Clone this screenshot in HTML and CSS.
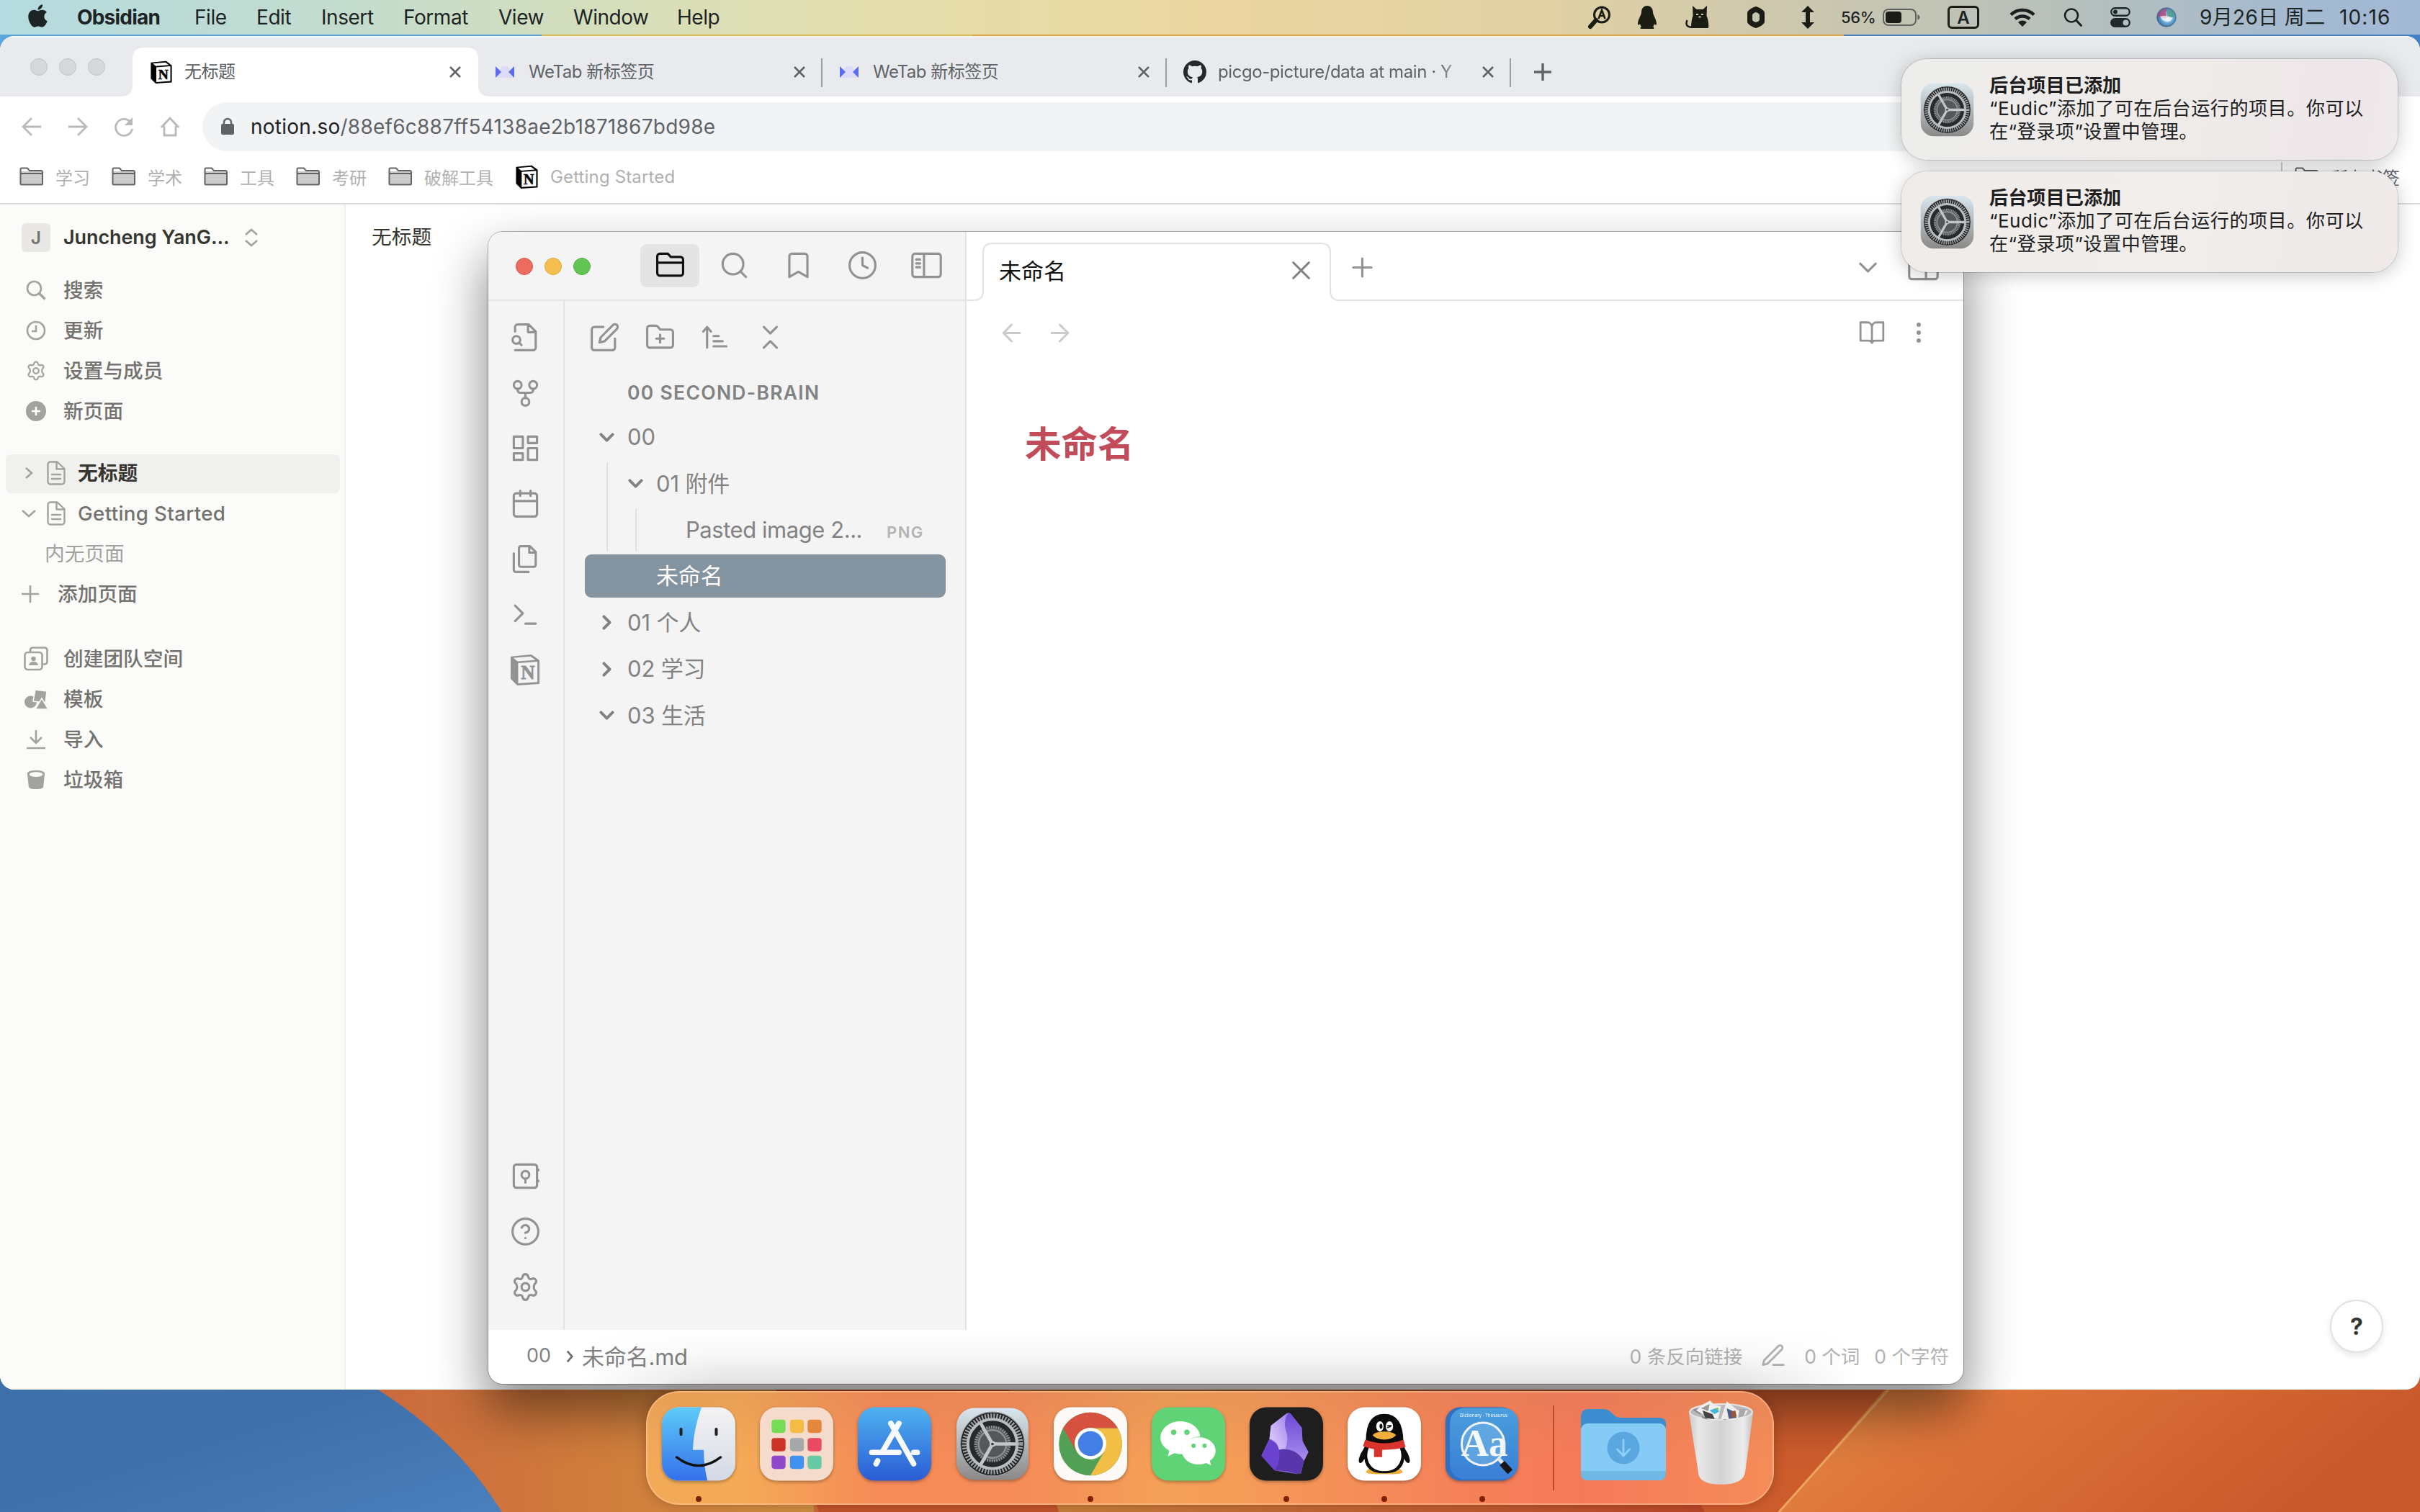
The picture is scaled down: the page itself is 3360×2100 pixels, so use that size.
FILE: index.html
```html
<!DOCTYPE html>
<html lang="zh-CN">
<head>
<meta charset="utf-8">
<title>Desktop</title>
<link rel="stylesheet" href="styles.css">
</head>
<body>
<svg class="defs" aria-hidden="true">
  <defs>
    <linearGradient id="gBlue" x1="0" y1="0" x2="1" y2="1"><stop offset="0" stop-color="#3c70a8"/><stop offset=".45" stop-color="#3f6fa9"/><stop offset="1" stop-color="#4a80bd"/></linearGradient>
    <linearGradient id="gLeft" x1="0" y1="0" x2="1" y2="0"><stop offset="0" stop-color="#c9683d"/><stop offset=".5" stop-color="#d27c3c"/><stop offset="1" stop-color="#cd8f40"/></linearGradient>
    <linearGradient id="gMid" x1="0" y1="0" x2="1" y2="0"><stop offset="0" stop-color="#c8843c"/><stop offset="1" stop-color="#b9472a"/></linearGradient>
    <linearGradient id="gRight" x1="0" y1="0" x2="1" y2=".3"><stop offset="0" stop-color="#dc8f45"/><stop offset=".35" stop-color="#e0763b"/><stop offset="1" stop-color="#c9592b"/></linearGradient>
    <linearGradient id="gGear" x1="0" y1="0" x2="0" y2="1"><stop offset="0" stop-color="#d9e6ee"/><stop offset="1" stop-color="#8b8987"/></linearGradient>
    <linearGradient id="gFinder" x1="0" y1="0" x2="0" y2="1"><stop offset="0" stop-color="#5ecbf9"/><stop offset="1" stop-color="#3470ea"/></linearGradient>
    <linearGradient id="gFinderR" x1="0" y1="0" x2="0" y2="1"><stop offset="0" stop-color="#f3f2f3"/><stop offset="1" stop-color="#d3dae6"/></linearGradient>
    <linearGradient id="gStore" x1="0" y1="0" x2="0" y2="1"><stop offset="0" stop-color="#4fb2ef"/><stop offset="1" stop-color="#2a5cd6"/></linearGradient>
    <linearGradient id="gDict" x1="0" y1="0" x2="0" y2="1"><stop offset="0" stop-color="#4a9edd"/><stop offset="1" stop-color="#3a7fd6"/></linearGradient>
    <linearGradient id="gCrystalA" x1="0" y1="1" x2="1" y2="0"><stop offset="0" stop-color="#e3d5fb"/><stop offset="1" stop-color="#a384ee"/></linearGradient>
    <linearGradient id="gCrystalB" x1="0" y1="0" x2="0" y2="1"><stop offset="0" stop-color="#6d48d6"/><stop offset="1" stop-color="#a98ced"/></linearGradient>
    <linearGradient id="gTrash" x1="0" y1="0" x2="1" y2="0"><stop offset="0" stop-color="#c9c8c9"/><stop offset=".15" stop-color="#e8e8e9"/><stop offset=".5" stop-color="#d2d2d2"/><stop offset=".85" stop-color="#ececec"/><stop offset="1" stop-color="#c2c2c2"/></linearGradient>
    <radialGradient id="gSiri" cx=".55" cy=".5" r=".55"><stop offset="0" stop-color="#f4fbff"/><stop offset=".35" stop-color="#8fc9ea"/><stop offset=".75" stop-color="#4a8fc0"/><stop offset="1" stop-color="#3f5f8a"/></radialGradient>
  </defs>
  <symbol id="notion" viewBox="0 0 44 46">
    <path d="M2 5 L31 2 L42 10 V43 L11 45 L2 36 Z" fill="currentColor" stroke="currentColor" stroke-width="2" stroke-linejoin="round"/>
    <path d="M5 6 L30 4 L37 9 L11 11 Z" fill="var(--paper)"/>
    <path d="M12 13.500 L40 11.500 V41 L12 43 Z" fill="var(--paper)"/>
    <text x="26" y="37" text-anchor="middle" font-family="Liberation Serif" font-weight="700" font-size="28" fill="currentColor" stroke="currentColor" stroke-width=".8">N</text>
  </symbol>
  <symbol id="x" viewBox="0 0 16 16"><path d="M1 1 15 15M15 1 1 15" fill="none" stroke="currentColor" stroke-width="2.600"/></symbol>
  <symbol id="wetab" viewBox="0 0 26 16"><path d="M0 16 9 0h8l9 16z" fill="#dcdcfa"/><path d="M0 0 8 8 0 16zM26 0 18 8l8 8z" fill="#5a6cf0"/></symbol>
  <symbol id="bfolder" viewBox="0 0 34 26"><path d="M2 6h30v16a2 2 0 0 1-2 2H4a2 2 0 0 1-2-2z" fill="#ccc"/><path d="M1.500 23V3a1.500 1.500 0 0 1 1.500-1.500h8l3 3.500h16a2 2 0 0 1 2 2v16a1.500 1.500 0 0 1-1.500 1.500H3A1.500 1.500 0 0 1 1.500 23zM2 9h30" fill="none" stroke="#626367" stroke-width="2"/></symbol>
  <symbol id="gearfull" viewBox="0 0 100 100">
    <rect x="1" y="1" width="98" height="98" rx="24" fill="url(#gGear)"/>
    <circle cx="50" cy="50" r="43.500" fill="#1d1e1f"/>
    <circle cx="50" cy="50" r="38" fill="none" stroke="#9da1a4" stroke-width="7" stroke-dasharray="2.200 1.800"/>
    <circle cx="50" cy="50" r="43.500" fill="none" stroke="#9a9da0" stroke-width="1"/>
    <circle cx="50" cy="50" r="33.500" fill="#27292a" stroke="#b9bdc0" stroke-width="4"/>
    <circle cx="50" cy="50" r="23" fill="#4c4e4f" stroke="#8d9092" stroke-width="4" stroke-dasharray="2 1.200"/>
    <circle cx="50" cy="50" r="19" fill="#555758" stroke="#8e9193" stroke-width="2.500"/>
    <path d="M50 50h32M50 50 34 22M50 50 34 78" stroke="#c3c7ca" stroke-width="4.500"/>
    <circle cx="50" cy="50" r="4" fill="#c3c7ca"/><circle cx="50" cy="50" r="1.800" fill="#333"/>
  </symbol>
  <symbol id="gear" viewBox="0 0 24 24"><path d="M12 2c1.300 0 1.900.8 2.200 2.100.3 1.500 1.400 2.100 2.800 1.600 1.300-.5 2.300-.4 3 .7s.4 2.100-.6 3c-1.200 1.100-1.200 4.100 0 5.200 1 .9 1.300 1.900.6 3s-1.700 1.200-3 .7c-1.400-.5-2.500.1-2.800 1.600C13.900 21.200 13.300 22 12 22s-1.900-.8-2.200-2.100c-.3-1.500-1.400-2.100-2.800-1.600-1.300.5-2.300.4-3-.7s-.4-2.100.6-3c1.200-1.100 1.200-4.100 0-5.200-1-.9-1.300-1.900-.6-3s1.700-1.200 3-.7c1.400.5 2.500-.1 2.800-1.600C10.100 2.800 10.700 2 12 2z"/><circle cx="12" cy="12" r="3"/></symbol>
  <symbol id="doc" viewBox="0 0 26 34"><path d="M1.500 5a3.500 3.500 0 0 1 3.500-3.500h9.500L24.500 11v18a3.500 3.500 0 0 1-3.500 3.500H5A3.500 3.500 0 0 1 1.500 29zM13.500 2v9.500h11M7 19h12M7 25h12" fill="none" stroke="currentColor" stroke-width="2.400" stroke-linejoin="round" stroke-linecap="round"/></symbol>
  <symbol id="chev" viewBox="0 0 24 24"><path d="m6 9 6 6 6-6"/></symbol>
  <symbol id="chevr" viewBox="0 0 24 24"><path d="m9 6 6 6-6 6"/></symbol>
</svg>

<svg class="wallpaper" viewBox="0 0 3360 2100" preserveAspectRatio="none">
  <rect width="3360" height="2100" fill="#c96c3a"/>
  <rect width="752" height="90" fill="#5aa5da"/><rect x="752" width="600" height="90" fill="#d6b94e"/><rect x="1350" width="1250" height="90" fill="#dca140"/><rect x="2560" width="800" height="90" fill="#4382c4"/>
  <path d="M0 1880H500L525 1930Q635 2000 697 2100H0z" fill="url(#gBlue)"/>
  <path d="M500 1880H1130V2100H697Q635 2000 525 1930z" fill="url(#gLeft)"/>
  <path d="M1060 1880H1400L1470 2100H1137z" fill="#bf542c"/>
  <path d="M1380 1880H2300L2367 2100H1471z" fill="url(#gMid)"/>
  <path d="M2250 1880H2660L2470 2100H2367z" fill="#cd5c2d"/>
  <path d="M2660 1880H3360V2100H2470z" fill="url(#gRight)"/>
  <path d="M2622 1930 2470 2100" stroke="#eaa55f" stroke-width="3"/>
</svg>

<header class="menubar">
  <svg class="apple" viewBox="0 0 384 512"><path fill="#1d2424" d="M318.700 268.700c-.2-36.700 16.400-64.400 50-84.800-18.800-26.900-47.200-41.700-84.700-44.600-35.500-2.800-74.300 20.700-88.500 20.700-15 0-49.400-19.700-76.400-19.700C63.300 141.200 4 184.800 4 273.500q0 39.300 14.400 81.200c12.800 36.700 59 126.700 107.200 125.200 25.200-.6 43-17.900 75.800-17.900 31.800 0 48.300 17.900 76.400 17.900 48.600-.7 90.400-82.500 102.600-119.300-65.200-30.700-61.700-90-61.700-91.900zm-56.600-164.200c27.300-32.400 24.800-61.900 24-72.500-24.100 1.400-52 16.400-67.900 34.900-17.500 19.800-27.800 44.300-25.600 71.900 26.100 2 49.900-11.400 69.500-34.300z"/></svg>
  <nav class="menus"><b>Obsidian</b><span>File</span><span>Edit</span><span>Insert</span><span>Format</span><span>View</span><span>Window</span><span>Help</span></nav>
  <div class="tray">
    <svg viewBox="0 0 32 32"><circle cx="19" cy="12.500" r="10.500" fill="none" stroke="#1b1c14" stroke-width="3"/><path d="M11 20 3 29" stroke="#1b1c14" stroke-width="6" stroke-linecap="round"/><path d="m14.500 18 4.500-12 4.500 12M16 14h6" fill="none" stroke="#1b1c14" stroke-width="2.600"/></svg>
    <svg viewBox="0 0 32 32"><path d="M16 0c5 0 8 4 8 9 0 4 5 10 5 16 0 2-2 2-3 0-.5 2-1 3-2 4 2 1 2 3 0 3H8c-2 0-2-2 0-3-1-1-1.500-2-2-4-1 2-3 2-3 0 0-6 5-12 5-16 0-5 3-9 8-9z" fill="#1b1c14"/></svg>
    <svg viewBox="0 0 34 32"><path d="M8 31Q8 20 10.500 14L10 0l5.500 5h9L30 0l-.5 14Q33 22 32 31z" fill="#1b1c14"/><path d="M12 29.500C2 31 0 26 2.500 20" fill="none" stroke="#1b1c14" stroke-width="2.500"/><path d="M15 12h3M22 12h3M18.500 15.500h3" stroke="#cfc9ab" stroke-width="2"/></svg>
    <svg viewBox="0 0 32 32"><path d="M16 1c4 1 12 5 12 9v12c0 4-8 8-12 9-4-1-12-5-12-9V10c0-4 8-8 12-9z" fill="#1b1c14"/><path d="M16 9c3 1 5 2 5 4v6c0 2-2 3-5 4-3-1-5-2-5-4v-6c0-2 2-3 5-4z" fill="#c5c5b2"/></svg>
    <svg viewBox="0 0 32 32"><path d="M16 0 25 9h-6v14h6l-9 9-9-9h6V9H7z" fill="#1b1c14"/></svg>
    <span class="pct">56%</span>
    <svg class="batt" viewBox="0 0 52 24"><rect x="1" y="1" width="45" height="22" rx="7" fill="none" stroke="#5f635f" stroke-width="2"/><rect x="4" y="4" width="22" height="16" rx="4" fill="#1b1c14"/><path d="M48.500 8v8q3-1.500 3-4t-3-4" fill="#5f635f"/></svg>
    <span class="abox">A</span>
    <svg class="wifi" viewBox="0 0 36 26"><g fill="none" stroke="#1b1f20" stroke-width="4.400"><path d="M2 9.500a23 23 0 0 1 32 0M8 15.500a14.500 14.500 0 0 1 20 0"/></g><path d="M18 26l-6-6a8.500 8.500 0 0 1 12 0z" fill="#1b1f20"/></svg>
    <svg class="msearch" viewBox="0 0 26 26"><circle cx="11" cy="10.500" r="9" fill="none" stroke="#1b1f20" stroke-width="2.600"/><path d="m17.500 17 7 7.500" stroke="#1b1f20" stroke-width="3" stroke-linecap="round"/></svg>
    <svg class="cc" viewBox="0 0 28 28"><rect x="1.300" y="1.300" width="25.400" height="10.400" rx="5.200" fill="none" stroke="#20272b" stroke-width="2.400"/><circle cx="7" cy="6.500" r="3" fill="#20272b"/><rect y="15" width="28" height="13" rx="6.500" fill="#20272b"/><circle cx="21.500" cy="21.500" r="4" fill="#b3c0c8"/></svg>
    <svg class="siri" viewBox="0 0 28 28"><circle cx="14" cy="14" r="13.500" fill="url(#gSiri)"/><path d="M2 12Q4 3 14 2q-1 9 1 13Q6 17 2 12z" fill="#b8447f" opacity=".8"/><path d="M15 2q9 2 11 10-5 4-11 2z" fill="#4f9c8c" opacity=".85"/><path d="M5 13q8-3 18 2-4 7-10 5t-8-7z" fill="#fff" opacity=".7"/><circle cx="14" cy="14" r="13" fill="none" stroke="#55506a" opacity=".6"/></svg>
    <span class="date">9月26日 周二</span><span class="time">10:16</span>
  </div>
</header>

<main class="chrome">
  <div class="tabstrip">
    <div class="dots"><i></i><i></i><i></i></div>
    <div class="tab active">
      <svg class="tabshape" viewBox="0 0 512 68"><path d="M0 68Q16 68 16 52V16Q16 0 32 0H480Q496 0 496 16V52Q496 68 512 68z" fill="#fff"/></svg>
      <svg class="fav"><use href="#notion"/></svg><span>无标题</span><svg class="x"><use href="#x"/></svg>
    </div>
    <div class="tab"><svg class="fav we"><use href="#wetab"/></svg><span>WeTab 新标签页</span><svg class="x"><use href="#x"/></svg></div>
    <div class="tab"><svg class="fav we"><use href="#wetab"/></svg><span>WeTab 新标签页</span><svg class="x"><use href="#x"/></svg></div>
    <div class="tab"><svg class="fav" viewBox="0 0 16 16"><path fill="#24292e" d="M8 0C3.580 0 0 3.580 0 8c0 3.540 2.290 6.530 5.470 7.590.4.070.55-.17.55-.38 0-.19-.01-.82-.01-1.490-2.010.37-2.530-.49-2.690-.94-.09-.23-.48-.94-.82-1.130-.28-.15-.68-.52-.01-.53.63-.01 1.080.58 1.230.82.72 1.210 1.870.87 2.330.66.070-.52.280-.87.51-1.070-1.780-.2-3.640-.89-3.640-3.950 0-.87.31-1.590.82-2.150-.08-.2-.36-1.020.080-2.120 0 0 .67-.21 2.200.82.64-.18 1.320-.27 2-.27s1.360.09 2 .27c1.530-1.040 2.200-.82 2.200-.82.44 1.100.16 1.920.080 2.120.51.56.82 1.270.82 2.150 0 3.070-1.870 3.750-3.650 3.950.29.25.54.73.54 1.480 0 1.070-.01 1.930-.01 2.200 0 .21.15.46.55.38A8.010 8.010 0 0 0 16 8c0-4.420-3.580-8-8-8z"/></svg><span class="fade">picgo-picture/data at main · Y</span><svg class="x"><use href="#x"/></svg></div>
    <svg class="newtab" viewBox="0 0 24 24"><path d="M12 0v24M0 12h24" stroke="#5f6368" stroke-width="3.400"/></svg>
  </div>
  <div class="toolbar">
    <svg viewBox="0 0 28 28"><path d="M27 14H3M14 2 2 14l12 12"/></svg>
    <svg viewBox="0 0 28 28"><path d="M1 14h24M14 2l12 12-12 12"/></svg>
    <svg viewBox="0 0 28 28"><path d="M23 7.500A11.500 11.500 0 1 0 25.500 17"/><path d="M26 1v11H15z" fill="#b9b9b9" stroke="none"/></svg>
    <svg viewBox="0 0 28 28"><path d="M2 15 14 2l12 13M6 13v13h16V13"/></svg>
    <div class="omni">
      <svg viewBox="0 0 18 24"><rect y="8" width="18" height="15" rx="2" fill="#5f6368"/><path d="M4 9V6a5 5 0 0 1 10 0v3" fill="none" stroke="#5f6368" stroke-width="2.400"/></svg>
      <p><em>notion.so</em>/88ef6c887ff54138ae2b1871867bd98e</p>
    </div>
  </div>
  <div class="bookmarks">
    <a><svg><use href="#bfolder"/></svg>学习</a><a><svg><use href="#bfolder"/></svg>学术</a><a><svg><use href="#bfolder"/></svg>工具</a><a><svg><use href="#bfolder"/></svg>考研</a><a><svg><use href="#bfolder"/></svg>破解工具</a>
    <a class="gs"><svg class="n"><use href="#notion"/></svg>Getting Started</a>
    <a class="all"><svg><use href="#bfolder"/></svg>所有书签</a>
  </div>
  <div class="page">
    <aside class="nside">
      <div class="nrow user"><span class="jbox">J</span><b>Juncheng YanG...</b><svg class="ud" viewBox="0 0 20 26"><path d="m2 9 8-7 8 7M2 17l8 7 8-7"/></svg></div>
      <div class="nrow"><svg viewBox="0 0 28 28"><circle cx="11.500" cy="11.500" r="9.500"/><path d="m18.500 18.500 8 8" stroke-width="3.600"/></svg>搜索</div>
      <div class="nrow"><svg viewBox="0 0 28 28"><circle cx="14" cy="14" r="12"/><path d="M14 7v8H8"/></svg>更新</div>
      <div class="nrow"><svg viewBox="0 0 28 28"><g class="thin"><path d="M14 1.500c1.700 0 2.400 1 2.800 2.700.4 1.800 1.700 2.500 3.400 1.900 1.700-.6 2.900-.5 3.800.9s.5 2.700-.8 3.800c-1.500 1.400-1.500 5 0 6.400 1.300 1.100 1.700 2.400.8 3.800s-2.100 1.500-3.800.9c-1.700-.6-3 .1-3.400 1.900-.4 1.700-1.100 2.700-2.800 2.700s-2.400-1-2.800-2.700c-.4-1.800-1.700-2.500-3.400-1.900-1.700.6-2.900.5-3.800-.9s-.5-2.700.8-3.800c1.500-1.400 1.500-5 0-6.400C3.500 9.700 3.100 8.400 4 7s2.100-1.500 3.800-.9c1.700.6 3-.1 3.400-1.900.4-1.700 1.100-2.700 2.800-2.700z"/><circle cx="14" cy="14" r="3.800"/></g></svg>设置与成员</div>
      <div class="nrow"><svg viewBox="0 0 28 28"><circle cx="14" cy="14" r="14" fill="#a3a29e" stroke="none"/><path d="M14 8v12M8 14h12" stroke="#fff"/></svg>新页面</div>
      <div class="nrow pg sel"><svg class="cv" viewBox="0 0 20 20"><path d="m6 3 8 7-8 7"/></svg><svg class="doc"><use href="#doc"/></svg>无标题</div>
      <div class="nrow pg"><svg class="cv" viewBox="0 0 20 20"><path d="m1 6 9 8 9-8"/></svg><svg class="doc"><use href="#doc"/></svg><span class="ls">Getting Started</span></div>
      <div class="nrow none">内无页面</div>
      <div class="nrow add"><svg viewBox="0 0 24 24"><path d="M12 0v24M0 12h24"/></svg>添加页面</div>
      <div class="nrow team"><svg class="wide" viewBox="0 0 34 34"><rect x="1.500" y="8" width="24" height="24" rx="4"/><path d="M9 8V5a3.500 3.500 0 0 1 3.500-3.500H29A3.500 3.500 0 0 1 32.500 5v16a3.500 3.500 0 0 1-3.500 3.500h-3"/><circle cx="13.500" cy="17" r="3.200" fill="#a3a29e" stroke="none"/><path d="M7 26q1-5 6.500-5t6.500 5z" fill="#a3a29e" stroke="none"/></svg>创建团队空间</div>
      <div class="nrow"><svg class="wide" viewBox="0 0 34 30"><circle cx="9.500" cy="19" r="8.500" fill="#a3a29e" stroke="none"/><path d="m16 2 16 2-2 16-17-2z" fill="#a3a29e" stroke="#fbfbfa" stroke-width="1.500"/><path d="m25 14 9 15H16z" fill="#a3a29e" stroke="#fbfbfa" stroke-width="1.500"/></svg>模板</div>
      <div class="nrow"><svg viewBox="0 0 28 28"><path d="M14 1v17M6 11l8 8 8-8M1 26h26"/></svg>导入</div>
      <div class="nrow"><svg viewBox="0 0 28 30"><path d="M1 6c0-3 4-5 13-5s13 2 13 5l-2 18c0 3-3 5-11 5S3 27 3 24z" fill="#a3a29e" stroke="none"/><ellipse cx="14" cy="7" rx="10" ry="3.600" fill="#fbfbfa" stroke="none"/></svg>垃圾箱</div>
    </aside>
    <section class="ndoc">无标题</section>
    <button class="help">?</button>
  </div>
</main>

<section class="obsidian">
  <div class="obody">
    <div class="oleft">
      <div class="ohead">
        <div class="lights"><i></i><i></i><i></i></div>
        <span class="obtn on"><svg class="ic" viewBox="0 0 24 24"><path d="M2 10h20M4 20h16a2 2 0 0 0 2-2V7.500a2 2 0 0 0-2-2h-7.500L10.200 3H4a2 2 0 0 0-2 2v13a2 2 0 0 0 2 2z"/></svg></span>
        <span class="obtn"><svg class="ic" viewBox="0 0 24 24"><circle cx="11" cy="11" r="8"/><path d="m21 21-4.300-4.300"/></svg></span>
        <span class="obtn"><svg class="ic" viewBox="0 0 24 24"><path d="m19 21-7-4-7 4V5a2 2 0 0 1 2-2h10a2 2 0 0 1 2 2z"/></svg></span>
        <span class="obtn"><svg class="ic" viewBox="0 0 24 24"><circle cx="12" cy="12" r="10"/><path d="M12 6v6l4 2"/></svg></span>
        <span class="obtn"><svg class="ic" viewBox="0 0 24 24"><rect x="1" y="3" width="22" height="18" rx="2"/><path d="M10 3v18M4 7.500h3M4 10.500h3M4 13.500h3"/></svg></span>
      </div>
      <div class="ocols">
        <div class="ribbon">
          <svg class="ic" viewBox="0 0 24 24"><path d="M14 2v6h6M4 7.500V4a2 2 0 0 1 2-2h8.500L20 7.500V20a2 2 0 0 1-2 2H4"/><circle cx="5" cy="14" r="3"/><path d="m9 18-1.900-1.900"/></svg>
          <svg class="ic" viewBox="0 0 24 24"><circle cx="12" cy="19" r="3"/><circle cx="6" cy="6" r="3"/><circle cx="18" cy="6" r="3"/><path d="M18 9v1a2 2 0 0 1-2 2H8a2 2 0 0 1-2-2V9M12 12v4"/></svg>
          <svg class="ic" viewBox="0 0 24 24"><path d="M3 3h7v9H3zM14 3h7v5h-7zM14 12h7v9h-7zM3 16h7v5H3z"/></svg>
          <svg class="ic" viewBox="0 0 24 24"><rect x="3" y="4" width="18" height="18" rx="2"/><path d="M16 2v4M8 2v4M3 10h18"/></svg>
          <svg class="ic" viewBox="0 0 24 24"><path d="M15.500 2H8.600c-.4 0-.8.2-1.100.5-.3.3-.5.7-.5 1.100v12.800c0 .4.2.8.5 1.100.3.3.7.5 1.100.5h9.800c.4 0 .8-.2 1.100-.5.3-.3.5-.7.5-1.100V6.500zM15 2v5h5M3 7.600v12.800c0 .4.2.8.5 1.100.3.3.7.5 1.100.5h9.800"/></svg>
          <svg class="ic" viewBox="0 0 24 24"><path d="m4 17 6-6-6-6M12 19h8" transform="translate(0 .6)"/></svg>
          <svg class="nic"><use href="#notion"/></svg>
          <svg class="ic vault" viewBox="0 0 24 24"><rect x="3" y="3" width="18" height="18" rx="2"/><circle cx="12" cy="11" r="3"/><path d="M12 14v3M22 7v.5M22 15.500v.5"/></svg>
          <svg class="ic" viewBox="0 0 24 24"><circle cx="12" cy="12" r="10"/><path d="M9.090 9a3 3 0 0 1 5.830 1c0 2-3 3-3 3M12 17h.01"/></svg>
          <svg class="ic" viewBox="0 0 24 24"><use href="#gear"/></svg>
        </div>
        <div class="files">
          <div class="ftools">
            <svg class="ic" viewBox="0 0 24 24"><path d="M11 4H4a2 2 0 0 0-2 2v14a2 2 0 0 0 2 2h14a2 2 0 0 0 2-2v-7M18.500 2.500a2.120 2.120 0 0 1 3 3L12 15l-4 1 1-4z"/></svg>
            <svg class="ic" viewBox="0 0 24 24"><path d="M12 10v6M9 13h6M4 20h16a2 2 0 0 0 2-2V8a2 2 0 0 0-2-2h-7.900l-2-2.400C9.700 3.200 9.200 3 8.500 3H4a2 2 0 0 0-2 2v13a2 2 0 0 0 2 2z"/></svg>
            <svg class="ic" viewBox="0 0 24 24"><path d="m3 7.500 3-3.500 3 3.500M6 4v16M11 11h4M11 15h7M11 19h10"/></svg>
            <svg class="ic" viewBox="0 0 24 24"><path d="m7 20 5-5 5 5M7 4l5 5 5-5"/></svg>
          </div>
          <div class="vname">00 SECOND-BRAIN</div>
          <div class="trow"><svg class="tc"><use href="#chev"/></svg>00</div>
          <div class="kids">
            <div class="trow"><svg class="tc"><use href="#chev"/></svg>01 附件</div>
            <div class="kids"><div class="trow leaf">Pasted image 2...<small>PNG</small></div></div>
          </div>
          <div class="trow picked">未命名</div>
          <div class="trow"><svg class="tc"><use href="#chevr"/></svg>01 个人</div>
          <div class="trow"><svg class="tc"><use href="#chevr"/></svg>02 学习</div>
          <div class="trow"><svg class="tc"><use href="#chev"/></svg>03 生活</div>
        </div>
      </div>
    </div>
    <div class="omain">
      <div class="otabs">
        <div class="lead"></div>
        <div class="otab"><svg class="outline" viewBox="0 0 508 81"><path d="M0 80Q13 80 13 67V14Q13 1 26 1H482Q495 1 495 14V67Q495 80 508 80" fill="none" stroke="#e3e3e3" stroke-width="2.200"/></svg><span>未命名</span><svg class="ic ox" viewBox="0 0 24 24"><path d="M18 6 6 18M6 6l12 12"/></svg></div>
        <div class="rest"><svg class="ic" viewBox="0 0 24 24"><path d="M12 5v14M5 12h14"/></svg><svg class="ic dn" viewBox="0 0 24 24"><path d="m6 9 6 6 6-6"/></svg><svg class="ic" viewBox="0 0 24 24"><rect x="1" y="3" width="22" height="18" rx="2"/><path d="M14 3v18"/></svg></div>
      </div>
      <div class="oview">
        <svg class="ic lt" viewBox="0 0 24 24"><path d="m12 19-7-7 7-7M19 12H5"/></svg>
        <svg class="ic lt fw" viewBox="0 0 24 24"><path d="M5 12h14M12 5l7 7-7 7"/></svg>
        <svg class="ic book" viewBox="0 0 24 24"><path d="M2 3h6a4 4 0 0 1 4 4v14a3 3 0 0 0-3-2H2zM22 3h-6a4 4 0 0 0-4 4v14a3 3 0 0 1 3-2h7z"/></svg>
        <svg class="ic more" viewBox="0 0 24 24"><circle cx="12" cy="12" r="1"/><circle cx="12" cy="5" r="1"/><circle cx="12" cy="19" r="1"/></svg>
      </div>
      <h1>未命名</h1>
    </div>
  </div>
  <footer class="ostatus">
    <span class="crumb">00</span><svg class="gt" viewBox="0 0 12 20"><path d="m2 2 7 8-7 8"/></svg><span class="fname">未命名.md</span>
    <span class="s1">0 条反向链接</span><svg class="ic pen" viewBox="0 0 24 24"><path d="M12 20h9M16.500 3.500a2.120 2.120 0 0 1 3 3L7 19l-4 1 1-4z"/></svg><span class="s2">0 个词</span><span class="s3">0 个字符</span>
  </footer>
</section>

<div class="notes">
  <article class="note"><svg><use href="#gearfull"/></svg><div><b>后台项目已添加</b><p>“Eudic”添加了可在后台运行的项目。你可以<br>在“登录项”设置中管理。</p></div></article>
  <article class="note"><svg><use href="#gearfull"/></svg><div><b>后台项目已添加</b><p>“Eudic”添加了可在后台运行的项目。你可以<br>在“登录项”设置中管理。</p></div></article>
</div>

<nav class="dock">
  <div class="app run"><svg viewBox="0 0 100 100"><rect width="100" height="100" rx="23" fill="url(#gFinderR)"/><path d="M23 0H54Q43 30 42 58H57Q57 80 62 100H23A23 23 0 0 1 0 77V23A23 23 0 0 1 23 0z" fill="url(#gFinder)"/><path d="M26 30v7M74 30v7" stroke="#222" stroke-width="4" stroke-linecap="round"/><path d="M20 68Q50 91 80 68" fill="none" stroke="#111" stroke-width="3.200" stroke-linecap="round"/></svg></div>
  <div class="app"><svg viewBox="0 0 100 100"><rect width="100" height="100" rx="23" fill="#f5dbcb"/><rect x="16" y="17" width="19" height="18" rx="4" fill="#75dd55"/><rect x="41" y="17" width="19" height="18" rx="4" fill="#f3bd43"/><rect x="65" y="17" width="19" height="18" rx="4" fill="#e5873a"/><rect x="16" y="42" width="19" height="18" rx="4" fill="#cc3428"/><rect x="41" y="42" width="19" height="18" rx="4" fill="#a5a9ac"/><rect x="65" y="42" width="19" height="18" rx="4" fill="#ea4b62"/><rect x="16" y="66" width="19" height="18" rx="4" fill="#9147cb"/><rect x="41" y="66" width="19" height="18" rx="4" fill="#3f92f0"/><rect x="65" y="66" width="19" height="18" rx="4" fill="#66caa5"/></svg></div>
  <div class="app"><svg viewBox="0 0 100 100"><rect width="100" height="100" rx="23" fill="url(#gStore)"/><g stroke="#f6fafe" stroke-width="7.500" stroke-linecap="round"><path d="M45 22 76 77M56 22 34 60M19 61.500H56M76 61.500h5M27 73l-2 4"/></g></svg></div>
  <div class="app"><svg><use href="#gearfull"/></svg></div>
  <div class="app run"><svg viewBox="0 0 100 100"><rect width="100" height="100" rx="23" fill="#fdf9f6"/><circle cx="50" cy="50" r="43" fill="#52a055"/><path d="M50 50V28.500H87.200A43 43 0 0 1 50 93L68.600 60.700z" fill="#f2be46"/><path d="M12.800 28.500A43 43 0 0 1 87.200 28.500H50L31.400 60.700z" fill="#d65140"/><circle cx="50" cy="49.500" r="21.500" fill="#fff"/><circle cx="50" cy="49.500" r="17" fill="#437fe6"/></svg></div>
  <div class="app"><svg viewBox="0 0 100 100"><rect width="100" height="100" rx="23" fill="#5fd375"/><path d="M39 19c15 0 27 10 27 21-13 0-25 9-25 20l1 4q-6 0-11-1.500L22 67l2-8C16 55 12 48 12 42c0-13 12-23 27-23z" fill="#fff"/><path d="M64 41c13 0 23 8 23 18 0 6-3 11-8 14l2 6-7-3q-4 2-10 2c-13 0-23-9-23-19s10-18 23-18z" fill="#fff"/><g fill="#5fd375"><circle cx="30" cy="34" r="3.700"/><circle cx="48" cy="34" r="3.700"/><circle cx="57" cy="52.500" r="3"/><circle cx="72" cy="52.500" r="3"/></g></svg></div>
  <div class="app run"><svg viewBox="0 0 100 100"><rect width="100" height="100" rx="23" fill="#1e1e1e"/><path d="M51 8 29 25 27 43 16 66 34 86 65 91 70 90 74 73 80 61 72 46 71 28 56 9Q53 7 51 8z" fill="#8a68e0"/><path d="M51 8 29 25 27 43Q38 46 40 58Q47 56 49 57Q54 42 49 30Q46 18 51 8z" fill="url(#gCrystalA)"/><path d="M53 8Q46 20 49 30Q54 42 50 57Q62 58 74 73L80 61 72 46 71 28 56 9z" fill="url(#gCrystalB)"/><path d="M27 44 16 66 34 86Q42 70 40 58Q38 48 27 44z" fill="#6b41cf"/><path d="M40 58Q42 72 34 86 52 86 65 91L70 90 74 73Q62 54 40 58z" fill="#5a36ad"/></svg></div>
  <div class="app run"><svg viewBox="0 0 100 100"><rect width="100" height="100" rx="23" fill="#fff"/><path d="M25 88q4-7 13-5l12 3 12-3q9-2 13 5-1 4-25 3-24 1-25-3z" fill="#f0ae3c"/><path d="M25 48Q24 9 50 9t26 39q0 6 6 15 5 12 1 13-3 0-6-6Q75 90 50 90T23 70q-3 6-6 6-4-1 1-13 6-9 7-15z" fill="#0b0b0b"/><path d="M29 55h42q4 10 1 18-5 14-22 14T28 73q-3-8 1-18z" fill="#fff"/><path d="M24 44q26 10 52 0l3 10q-10 4-32 4v10H36V57q-8-1-15-4z" fill="#d8342d"/><path d="M34 38q4-5 16-5t16 5q-5 6-16 6t-16-6z" fill="#f0ae3c"/><ellipse cx="44" cy="26" rx="5" ry="7" fill="#fff"/><ellipse cx="57" cy="26" rx="5" ry="7" fill="#fff"/><ellipse cx="45.500" cy="26" rx="2" ry="3.400" fill="#111"/><path d="m54 25 6 0M54 28l5-2" stroke="#111" stroke-width="1.600"/></svg></div>
  <div class="app run"><svg viewBox="0 0 100 100"><rect width="96" height="100" rx="20" fill="#2f70c0"/><rect x="6" y="1" width="93" height="97" rx="20" fill="url(#gDict)"/><text x="52" y="13.500" text-anchor="middle" font-family="Open Sans" font-size="6.200" fill="#fff">Dictionary - Thesaurus</text><circle cx="51" cy="50" r="29" fill="#79b7e8" opacity=".55"/><text x="53" y="66" text-anchor="middle" font-family="Liberation Serif" font-weight="700" font-size="52" fill="#f3f8fd">Aa</text><circle cx="51" cy="50" r="29" fill="none" stroke="#eef2f6" stroke-width="3"/><path d="m73 71 5 5" stroke="#e8e8e8" stroke-width="5"/><path d="m77 76 11 12" stroke="#161616" stroke-width="9"/></svg></div>
  <i class="sep"></i>
  <svg class="dfolder" viewBox="0 0 118 100"><path d="M0 12Q0 0 10 0H32Q36 0 40 3L48 10Q51 12 56 12H108Q118 12 118 20V60H0z" fill="#3c8ed0"/><rect y="20" width="118" height="79" rx="9" fill="#86cbf6"/><path d="M0 86H118V90Q118 99 109 99H9Q0 99 0 90z" fill="#70b8e6"/><circle cx="59" cy="54" r="22.500" fill="#5aa6df"/><path d="M59 43v21M50.500 56l8.500 9 8.500-9" fill="none" stroke="#8fd0f8" stroke-width="2.800" stroke-linecap="round"/></svg>
  <svg class="trash" viewBox="0 0 92 120"><path d="M1 18Q1 8 46 8t45 10L80 101Q78 119 46 119T14 101z" fill="url(#gTrash)"/><ellipse cx="46" cy="17" rx="44" ry="11" fill="#b9b9ba" stroke="#e6e6e6" stroke-width="2"/><path d="m6 14 8-2 6 14 8 2z" fill="#888"/><path d="m11 15 9-8 11-6 5 6 10 2-4 18-16-4z" fill="#efefef"/><path d="m18 12 12-6-2 10z" fill="#999"/><path d="m30 15 8-3 6 4-7 4z" fill="#3fb6dc"/><path d="m36 13 5-2 3 3z" fill="#7bc34a"/><path d="m20 15 14 5 3 7-13-1zM50 20l8-6 4 12-12 2z" fill="#444"/><path d="m46 27 8-25 16 13 14 0-6 9-16 4z" fill="#ededed"/><path d="m54 12 9 4 5 9-11 2z" fill="#4a5f8c"/><path d="m60 17 6-2 2 8-7 3z" fill="#9b5537"/><path d="m72 13 9 0-3 10-8 2z" fill="#a9a9a9"/></svg>
</nav>
</body>
</html>
```

FILE: styles.css
```css
* { box-sizing: border-box; }
body { margin: 0; width: 3360px; height: 2100px; position: relative; overflow: hidden; font-family: Inter, "Noto Sans CJK SC", sans-serif; font-size: 28px; color: #1d2424; white-space: nowrap; --paper: #fff; }
svg { display: block; flex: none; overflow: visible; }
b, em, h1, p { margin: 0; font-style: normal; }
.defs { position: absolute; width: 0; height: 0; }
.wallpaper { position: absolute; inset: 0; width: 3360px; height: 2100px; }

.menubar { position: relative; height: 48px; display: flex; align-items: center; padding-left: 39px; background: linear-gradient(90deg, #b4dbe0 0, #c4dccc 500px, #d8dfb9 900px, #e4deae 1200px, #e9daa3 1550px, #ecd6a0 1670px, #e0d1a4 2160px, #c9c6b0 2550px, #b7c0ba 2850px, #a4bad1 3200px, #a2b8d5 3360px); }
.apple { width: 27px; height: 36px; margin-top: -5px; }
.menus { display: grid; grid-template-columns: 163px 86px 90px 114px 132px 104px 144px 80px; margin-left: 41px; width: 914px; letter-spacing: -.45px; line-height: 47px; }
.menus b { font-weight: 700; letter-spacing: -.8px; }
.tray { display: flex; align-items: center; margin-left: auto; padding-right: 36px; height: 48px; }
.tray svg { width: 32px; height: 32px; margin-right: 34px; }
.tray svg:nth-of-type(2) { margin-right: 37px; }
.tray svg:nth-of-type(3) { width: 34px; margin-right: 48px; }
.tray svg:nth-of-type(4) { margin-right: 40px; }
.tray svg:nth-of-type(5) { margin-right: 30px; }
.pct { font-size: 22px; width: 58px; letter-spacing: -.4px; font-weight: 500; }
.tray .batt { width: 52px; height: 24px; margin-right: 38px; }
.abox { width: 44px; height: 32px; border: 3px solid #1b1c14; border-radius: 6px; font-size: 24px; font-weight: 600; line-height: 27px; text-align: center; margin-right: 42px; }
.tray .wifi { width: 36px; height: 26px; margin-right: 39px; }
.tray .msearch { width: 26px; height: 26px; margin-right: 39px; }
.tray .cc { width: 28px; height: 28px; margin-right: 36px; }
.tray .siri { width: 28px; height: 28px; margin-right: 32px; }
.date { width: 194px; line-height: 46px; letter-spacing: .35px; }
.time { width: 76px; line-height: 46px; letter-spacing: 1.100px; }

.chrome { position: absolute; left: 0; top: 50px; width: 3360px; height: 1880px; display: flex; flex-direction: column; background: #fff; border-radius: 20px; overflow: hidden; }
.tabstrip { height: 84px; flex: none; background: #e8eaed; display: flex; border-top: 2px solid #f6f7f8; padding-top: 14px; font-size: 24px; color: #5f6368; }
.dots { width: 184px; display: flex; gap: 16px; padding: 15px 0 0 42px; }
.dots i { width: 24px; height: 24px; border-radius: 50%; background: #d7d8da; border: 1px solid #c1c2c4; }
.tab { position: relative; width: 478px; height: 68px; display: flex; align-items: center; padding: 0 24px 0 23px; }
.tab + .tab:not(.active)::after { content: ""; position: absolute; right: 0; top: 15px; width: 2px; height: 40px; background: #9a9da1; }
.tab.active { width: 480px; padding: 0 24px; color: #5c5f63; }
.tabshape { position: absolute; left: -16px; top: 0; width: 512px; height: 68px; }
.fav { width: 32px; height: 32px; margin-right: 16px; color: #000; z-index: 1; }
.tab span { z-index: 1; letter-spacing: -.5px; line-height: 32px; margin-top: -1px; }
.fav.we { width: 26px; height: 16px; margin: 0 20px 0 1px; }
.tab .x { width: 16px; height: 16px; margin-left: auto; z-index: 1; color: #5f6368; }
.tab .fade { letter-spacing: -.42px; -webkit-mask-image: linear-gradient(90deg, #000 308px, transparent 346px); }
.newtab { width: 24px; height: 24px; margin: 22px 0 0 32px; }
.toolbar { flex: none; height: 76px; display: flex; align-items: center; padding: 8px 0 0 30px; }
.toolbar > svg { width: 28px; height: 28px; margin-right: 36px; fill: none; stroke: #b9b9b9; stroke-width: 2.800; }
.toolbar > svg:nth-of-type(4) { margin-right: 31px; }
.omni { width: 2900px; height: 68px; border-radius: 34px; background: #f1f3f4; display: flex; align-items: center; padding-left: 26px; }
.omni svg { width: 18px; height: 24px; margin-right: 23px; }
.omni p { color: #5f6368; font-size: 28px; letter-spacing: .25px; }
.omni em { color: #202124; }
.bookmarks { flex: none; height: 74px; border-bottom: 2px solid #dadbdd; display: flex; gap: 30px; padding-left: 27px; font-size: 24px; color: #b0b0b0; align-items: center; }
.bookmarks a { display: flex; align-items: center; gap: 16px; height: 40px; margin-top: -2px; }
.bookmarks a svg { width: 34px; height: 26px; }
.bookmarks a svg.n { width: 33px; height: 33px; color: #000; }
.gs { letter-spacing: .15px; }
.bookmarks .all { margin-left: auto; margin-right: 28px; border-left: 2px solid #ccc; padding-left: 17px; color: #5f6368; }
.page { position: relative; flex: 1; display: flex; }
.nside { width: 480px; background: #fbfbfa; border-right: 2px solid #efefee; padding: 19px 6px 0 8px; color: #73726e; font-weight: 500; }
.nrow { height: 54px; margin-bottom: 2px; display: flex; align-items: center; padding-left: 28px; border-radius: 8px; line-height: 50px; font-size: 27.700px; padding-bottom: 2px; }
.nrow svg { width: 28px; height: 28px; margin-right: 24px; fill: none; stroke: #a3a29e; stroke-width: 2.600; }
.nrow .thin { stroke-width: 2.200; }
.nrow svg.wide { width: 34px; height: 34px; margin: 0 21px 0 -3px; }
.user { padding-left: 22px; margin-bottom: 18px; height: 56px; color: #37352f; }
.jbox { width: 40px; height: 40px; border-radius: 6px; background: #e9e8e6; color: #73726e; line-height: 41px; text-align: center; font-size: 24px; margin-right: 18px; font-weight: 600; }
.user b { font-weight: 600; font-size: 27px; width: 251px; letter-spacing: -.1px; }
.nrow .ud { width: 20px; height: 26px; }
.pg { padding-left: 22px; }
.nrow .cv { width: 20px; height: 20px; margin-right: 15px; }
.nrow .doc { width: 26px; height: 34px; margin-right: 17px; color: #a3a29e; }
.ls { letter-spacing: .35px; }
.sel { background: #f0f0ef; color: #37352f; font-weight: 600; margin-top: 32px; }
.none { padding-left: 54px; color: #a3a29e; font-weight: 400; }
.add { padding-left: 22px; }
.nrow.add svg { width: 24px; height: 24px; margin-right: 26px; }
.team { margin-top: 36px; }
.ndoc { padding: 25px 36px; color: #37352f; line-height: 40px; font-size: 27.700px; }
.help { position: absolute; left: 3235px; top: 1521px; width: 74px; height: 74px; border-radius: 50%; border: 2px solid #e2e2e2; background: #fff; box-shadow: 0 4px 8px rgba(0,0,0,.1); font: 700 32px Inter, sans-serif; color: #37352f; padding: 0; }

.obsidian { position: absolute; left: 678px; top: 322px; width: 2048px; height: 1600px; background: #fff; border-radius: 20px; display: flex; flex-direction: column; box-shadow: 0 0 0 1px rgba(0,0,0,.28), 0 36px 70px 4px rgba(0,0,0,.46); color: #828282; }
.ic { width: 43px; height: 43px; fill: none; stroke: #929292; stroke-width: 1.750; stroke-linecap: round; stroke-linejoin: round; }
.obody { height: 1525px; display: flex; }
.oleft { width: 664px; background: #f4f4f4; border-right: 2px solid #e3e3e3; border-top-left-radius: 20px; display: flex; flex-direction: column; }
.ohead { height: 96px; border-bottom: 2px solid #e3e3e3; display: flex; align-items: center; padding-left: 38px; padding-bottom: 1px; gap: 7px; }
.lights { display: flex; gap: 16px; margin-right: 62px; padding-top: 3px; }
.lights i { width: 24px; height: 24px; border-radius: 50%; background: #ed6a5e; border: 1px solid #d65a50; }
.lights i:nth-child(2) { background: #f5bf4f; border-color: #dba73e; }
.lights i:nth-child(3) { background: #62c554; border-color: #50ac43; }
.obtn { width: 82px; height: 60px; border-radius: 9px; display: grid; place-items: center; }
.on { background: #e4e4e4; }
.on .ic { stroke: #111; }
.ocols { flex: 1; display: flex; }
.ribbon { width: 106px; border-right: 2px solid #e3e3e3; display: flex; flex-direction: column; align-items: center; gap: 33.900px; padding: 29px 2px 38px 0; color: #929292; --paper: #f4f4f4; }
.nic { width: 42px; height: 44px; }
.vault { margin-top: auto; }
.files { flex: 1; padding: 29px 27px 0 28px; font-size: 31px; }
.ftools { display: flex; gap: 33.600px; padding-left: 6px; }
.vname { font-size: 26.500px; font-weight: 600; letter-spacing: 1.300px; padding-left: 59px; height: 37px; line-height: 36px; margin: 37px 0 13px; }
.trow { height: 60px; margin-bottom: 4.600px; padding-left: 18px; display: flex; align-items: center; border-radius: 9px; line-height: 56px; letter-spacing: -.15px; }
.tc { width: 25px; height: 25px; margin-right: 16px; fill: none; stroke: #828282; stroke-width: 2.900; transform: scale(1.3); stroke-linecap: round; stroke-linejoin: round; }
.kids { margin-left: 30px; border-left: 2px solid #e2e2e2; padding-left: 8px; }
.kids .kids { margin-bottom: 4px; }
.kids .kids .trow { margin-bottom: 0; }
.leaf { padding-left: 60px; letter-spacing: -.45px; }
.leaf small { font-size: 22px; font-weight: 600; color: #b3b3b3; margin: 5px 0 0 34px; letter-spacing: 1.400px; }
.picked { background: #83939f; color: #fff; padding-left: 99px; }
.omain { flex: 1; }
.otabs { height: 96px; display: flex; align-items: flex-end; }
.lead { width: 10px; border-bottom: 2px solid #e3e3e3; }
.otab { position: relative; width: 508px; height: 81px; display: flex; align-items: center; padding: 0 32px 5px 35px; color: #111; font-size: 31px; }
.otab span { margin-top: -2px; }
.outline { position: absolute; left: 0; top: 0; width: 508px; height: 81px; }
.ox { margin-left: auto; stroke: #828282; }
.rest { flex: 1; height: 96px; border-bottom: 2px solid #e3e3e3; display: flex; align-items: center; padding: 4px 34px 0 10px; }
.rest .dn { margin-left: auto; margin-right: 34px; }
.oview { height: 90px; display: flex; align-items: center; padding: 0 40px 2px 43px; }
.lt { width: 39px; height: 39px; stroke: #cbcbcb; }
.fw { margin-left: 28px; }
.book { width: 38px; height: 38px; margin: 0 27px 0 auto; }
.more { width: 38px; height: 38px; margin-right: 3px; }
h1 { font-size: 50.500px; font-weight: 700; color: #c24c5a; line-height: 70px; margin: 74px 0 0 81px; }
.ostatus { position: relative; flex: 1; display: flex; align-items: center; padding: 0 20px 4px 53px; border-radius: 0 0 20px 20px; font-size: 26.500px; color: #b3b3b3; }
.ostatus::before { content: ""; position: absolute; inset: 0; background: linear-gradient(180deg, rgba(0,0,0,.005), rgba(0,0,0,.03) 45%, rgba(0,0,0,.11)); -webkit-mask-image: linear-gradient(90deg, transparent 130px, #000 320px, #000 1720px, transparent 1900px); }
.crumb { color: #828282; width: 55px; font-size: 27px; }
.gt { width: 11px; height: 20px; fill: none; stroke: #707070; stroke-width: 3; margin: 2px 11px 0 0; }
.fname { color: #828282; font-size: 31px; letter-spacing: -.2px; }
.s1 { margin-left: auto; }
.pen { width: 38px; height: 38px; stroke: #b3b3b3; margin: 0 24px; }
.s3 { margin-left: 20px; }

.notes { position: absolute; left: 2640px; top: 82px; width: 689px; display: flex; flex-direction: column; gap: 16px; }
.note { height: 140px; border-radius: 36px; background: linear-gradient(100deg, #ededec 0, #efebe9 60%, #eee6ea 90%, #f0ebeb 100%); box-shadow: 0 0 0 1px rgba(0,0,0,.14), 0 4px 26px rgba(0,0,0,.22); display: flex; align-items: center; padding: 0 0 2px 26px; color: #1f1f1f; font-size: 26.200px; line-height: 32px; }
.note + .note { background: linear-gradient(100deg, #f0ecea, #f0edea 60%, #efe9ea 90%, #f0ebe9); }
.note svg { width: 75px; height: 75px; margin-right: 21px; margin-top: 2px; }
.note b { font-weight: 700; display: block; }
.note p { letter-spacing: .42px; }

.dock { position: absolute; left: 897px; top: 1932px; width: 1566px; height: 158px; border-radius: 46px; display: flex; align-items: flex-start; padding: 22px 0 0 22px; background: linear-gradient(180deg, rgba(190,120,80,.22), transparent 60%), linear-gradient(90deg, #f2aa58 0, #f4aa56 130px, #f68a58 330px, #f58c58 520px, #f5a057 720px, #f59a58 850px, #f58358 1100px, #f67a5a 1300px, #f48c58 1566px); box-shadow: inset 0 0 0 2px rgba(255,205,160,.5), 0 0 16px rgba(60,20,0,.3); }
.app { position: relative; width: 102px; margin-right: 34px; }
.app > svg { width: 102px; height: 103px; filter: drop-shadow(0 2px 2px rgba(0,0,0,.3)); }
.run::after { content: ""; position: absolute; left: 47px; top: 124px; width: 8px; height: 8px; border-radius: 50%; background: #7d2200; }
.sep { width: 2px; height: 118px; background: #c0492a; margin: -2px 37px 0 13px; }
.dfolder { width: 118px; height: 100px; margin: 3px 31px 0 0; }
.trash { width: 91px; height: 119px; margin-top: -10px; }
```
